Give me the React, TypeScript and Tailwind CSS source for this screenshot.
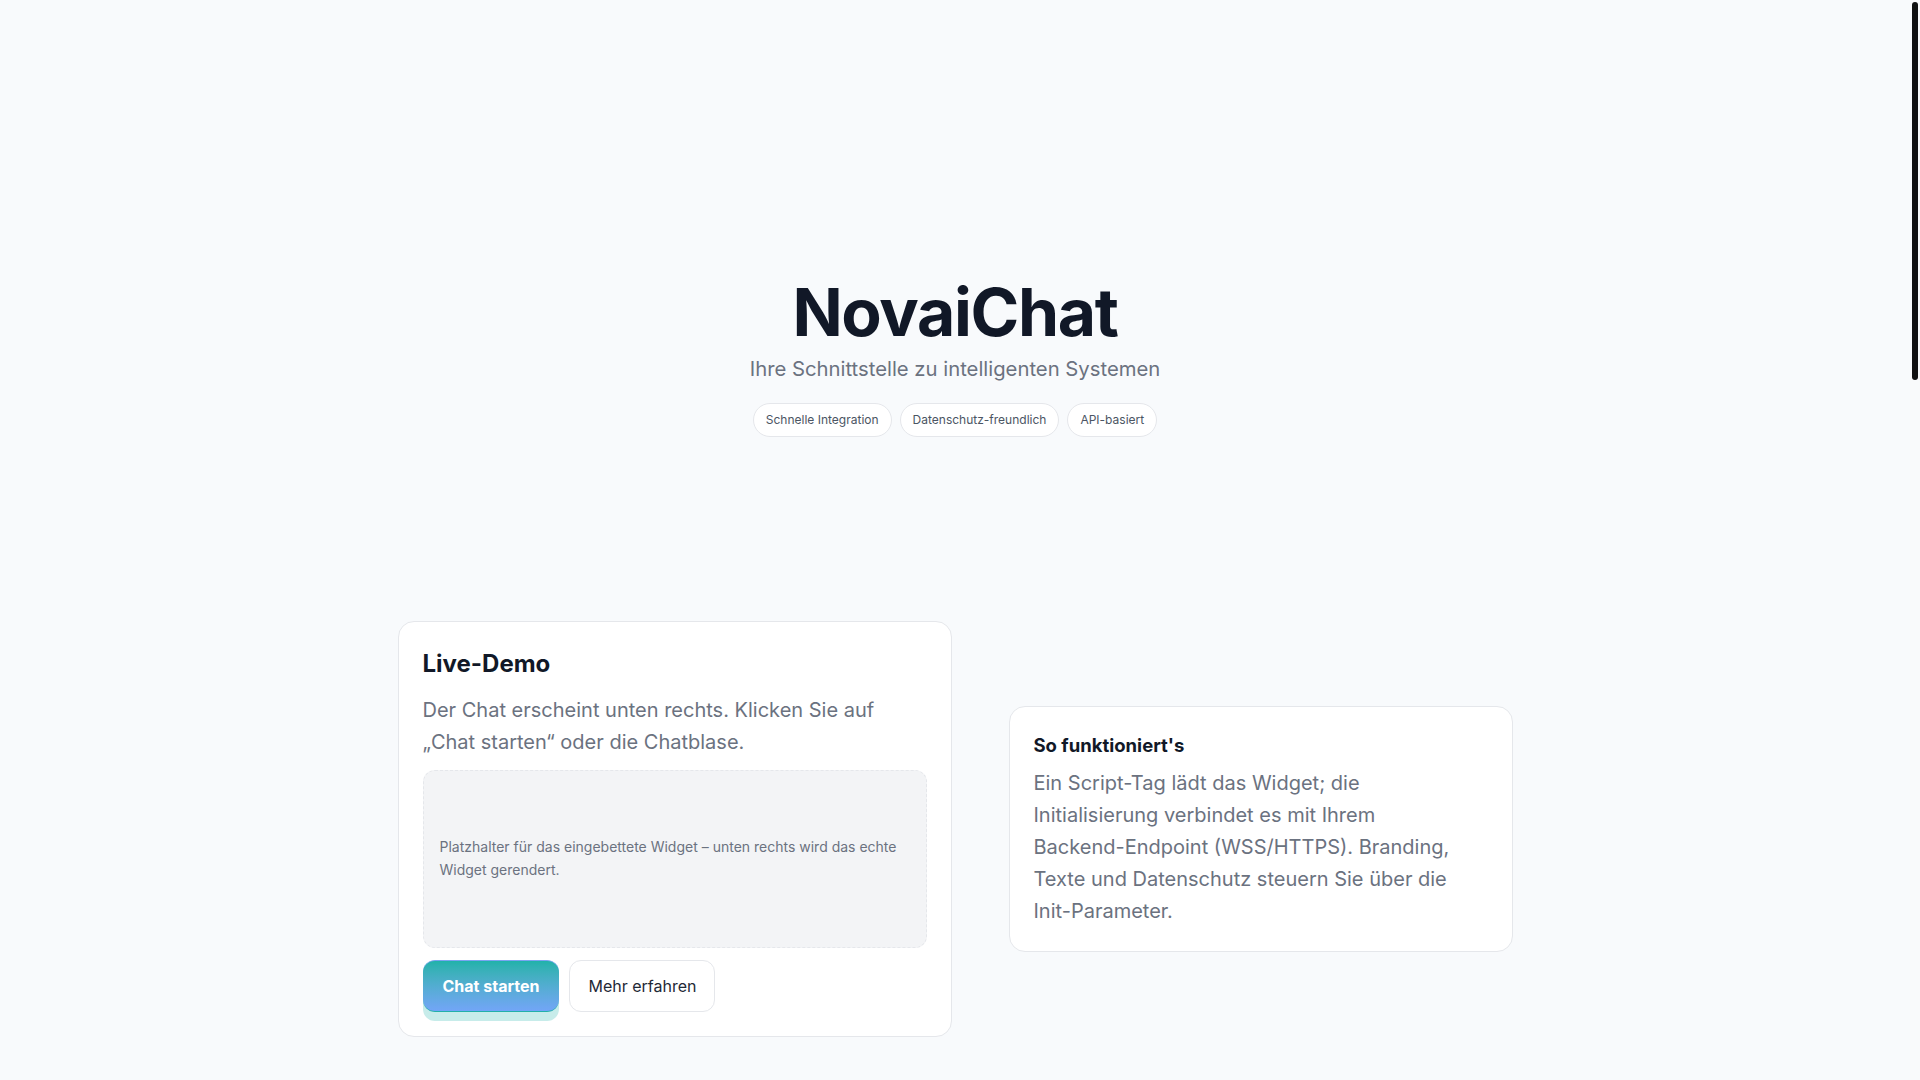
const CHIPS = ["Schnelle Integration", "Datenschutz-freundlich", "API-basiert"];

function Hero() {
  return (
    <section className="flex flex-col items-center pt-[279px] text-center">
      <h1 className="text-[66px] font-bold leading-none tracking-[-0.02em] text-[#111827]">NovaiChat</h1>
      <p className="mt-2.5 text-[20.3px] leading-7 text-[#6b7280]">Ihre Schnittstelle zu intelligenten Systemen</p>
      <div className="mt-5 flex items-center gap-2">
        {CHIPS.map((c) => (
          <span
            key={c}
            className="rounded-full border border-[#e5e7eb] bg-white px-3 py-2 text-xs leading-4 text-[#4b5563]"
          >
            {c}
          </span>
        ))}
      </div>
    </section>
  );
}

function DemoCard() {
  return (
    <div className="rounded-2xl border border-[#e5e7eb] bg-white p-6">
      <h2 className="text-2xl font-bold leading-9 text-[#111827]">Live-Demo</h2>
      <p className="mt-3 text-xl leading-8 text-[#6b7280]">
        Der Chat erscheint unten rechts. Klicken Sie auf „Chat starten“ oder die Chatblase.
      </p>
      <div className="mt-3 flex h-[178px] items-center rounded-xl border border-dashed border-[#e5e7eb] bg-[#f3f4f6] px-4">
        <p className="text-sm leading-relaxed text-[#6b7280]">
          Platzhalter für das eingebettete Widget – unten rechts wird das echte Widget gerendert.
        </p>
      </div>
      <div className="mt-3 flex items-center gap-2.5">
        <button className="h-[52px] rounded-xl border-t border-b border-t-[#7aa3f2] border-b-[#22b0aa] bg-gradient-to-b from-[#20b2aa] to-[#72a5f7] px-5 text-base font-bold text-white shadow-[0_9px_0_rgba(32,178,170,0.25)]">
          Chat starten
        </button>
        <button className="h-[52px] rounded-xl border border-[#e5e7eb] bg-white px-[18px] text-base font-normal text-[#1f2937]">
          Mehr erfahren
        </button>
      </div>
    </div>
  );
}

function InfoCard() {
  return (
    <div className="rounded-2xl border border-[#e5e7eb] bg-white p-6">
      <h3 className="text-[18.5px] font-bold leading-7 text-[#111827]">So funktioniert's</h3>
      <p className="mt-2 max-w-[430px] text-xl leading-8 text-[#6b7280]">
        Ein Script-Tag lädt das Widget; die Initialisierung verbindet es mit Ihrem Backend-Endpoint (WSS/HTTPS).
        Branding, Texte und Datenschutz steuern Sie über die Init-Parameter.
      </p>
    </div>
  );
}

export default function App() {
  return (
    <div className="flex h-screen bg-[#f8fafc] font-['Inter',sans-serif]">
      <main className="min-w-0 flex-1 overflow-hidden">
        <div className="min-h-[3080px]">
          <Hero />
          <section className="mx-auto mt-[184px] grid w-[1115px] grid-cols-[554px_504px] items-center gap-[57px]">
            <DemoCard />
            <InfoCard />
          </section>
        </div>
      </main>
      {/* scrollbar */}
      <aside className="w-[10px] shrink-0 bg-[#f9fafb] pt-[2px]">
        <div className="mx-[2px] h-[378px] rounded-full bg-[#111111]" />
      </aside>
    </div>
  );
}
